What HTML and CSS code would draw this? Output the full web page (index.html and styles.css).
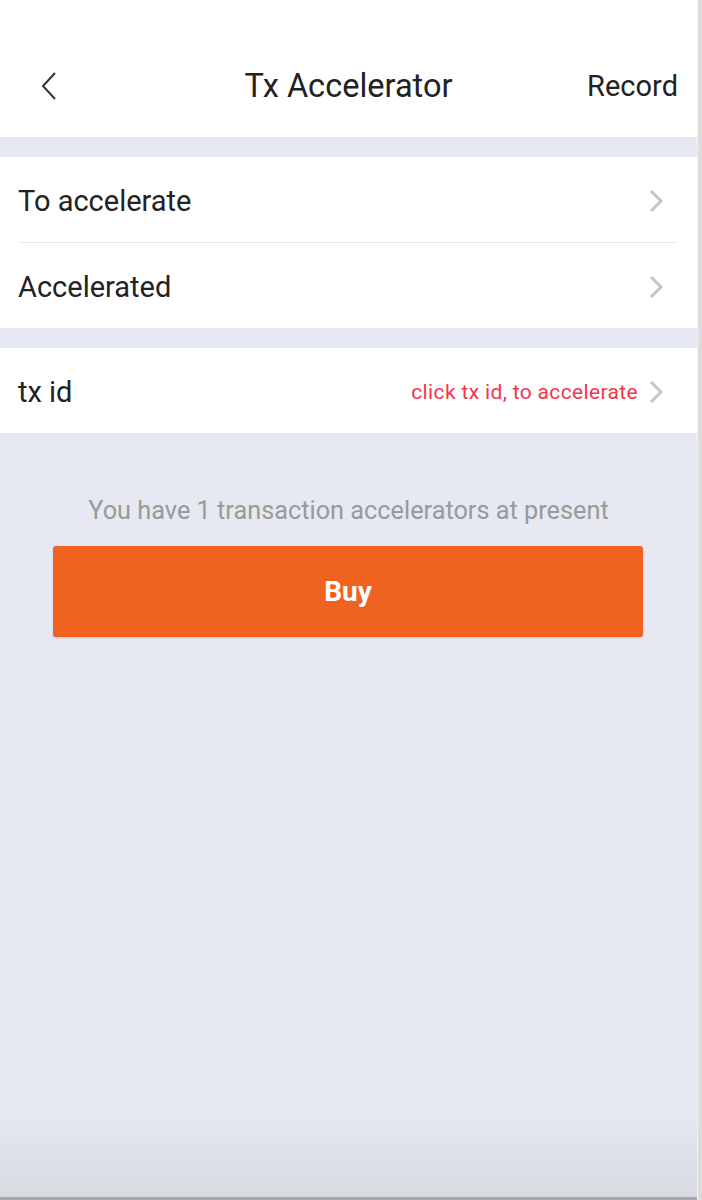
FILE: index.html
```html
<!DOCTYPE html>
<html>
<head>
<meta charset="utf-8">
<link rel="stylesheet" href="styles.css">
</head>
<body>
<div class="frame">
  <div class="screen">
    <header class="nav">
      <span class="back">
        <svg width="18" height="30" viewBox="0 0 18 30"><path d="M15 2 L3 15 L15 28" fill="none" stroke="#333" stroke-width="2"/></svg>
      </span>
      <h1 class="title">Tx Accelerator</h1>
      <span class="record">Record</span>
    </header>
    <section class="group">
      <div class="row">
        <span class="label">To accelerate</span>
        <svg class="chev" width="16" height="24" viewBox="0 0 16 24"><path d="M3 2 L13 12 L3 22" fill="none" stroke="#c6c6c6" stroke-width="3"/></svg>
      </div>
      <div class="row">
        <span class="label">Accelerated</span>
        <svg class="chev" width="16" height="24" viewBox="0 0 16 24"><path d="M3 2 L13 12 L3 22" fill="none" stroke="#c6c6c6" stroke-width="3"/></svg>
      </div>
    </section>
    <section class="group">
      <div class="row">
        <span class="label">tx id</span>
        <span class="hint">click tx id, to accelerate</span>
        <svg class="chev" width="16" height="24" viewBox="0 0 16 24"><path d="M3 2 L13 12 L3 22" fill="none" stroke="#c6c6c6" stroke-width="3"/></svg>
      </div>
    </section>
    <p class="info">You have 1 transaction accelerators at present</p>
    <div class="actions"><button class="buy">Buy</button></div>
    <div class="fade"></div>
  </div>
  <div class="edge"></div>
</div>
</body>
</html>
```
FILE: styles.css
```css
html, body { margin: 0; padding: 0; }
body { font-family: Roboto, "Noto Sans", sans-serif; background: #e6e9f1; }
.frame { display: flex; height: 1200px; overflow: hidden; }
.screen { width: 697px; background: #e6e9f1; position: relative; display: flex; flex-direction: column; }
.edge { width: 5px; background: #dcdcdc; border-left: 1px solid #f2f2f2; box-sizing: border-box; }
.nav { height: 137px; background: #fff; display: flex; align-items: center; padding: 34px 19px 0 40px; box-sizing: border-box; position: relative; }
.back { display: flex; width: 18px; height: 30px; }
.title { margin: 0; position: absolute; left: 0; right: 0; top: 34px; bottom: 0; display: flex; align-items: center; justify-content: center; font-weight: 400; font-size: 32.5px; color: #222; pointer-events: none; }
.record { margin-left: auto; font-size: 29px; color: #222; }
.group { background: #fff; margin-top: 20px; padding: 0 0 0 18px; }
.row { height: 85px; display: flex; align-items: center; padding-right: 33px; padding-top: 2px; box-sizing: border-box; }
.row + .row { border-top: 1px solid #e8e8e8; height: 86px; margin-right: 19px; padding-right: 14px; }
.group .row:first-child { margin-right: 19px; padding-right: 14px; }
.label { font-size: 29px; color: #222; }
.hint { margin-left: auto; font-size: 21px; color: #f3354d; margin-right: 10px; letter-spacing: 0.35px; }
.chev { margin-left: auto; display: block; }
.hint + .chev { margin-left: 0; }
.info { margin: 63px 0 0; text-align: center; font-size: 25.3px; color: #999; }
.actions { padding: 21px 54px 0 53px; }
.buy { width: 100%; height: 91px; border: none; border-radius: 3px; background: #f0621f; color: #fff; font-family: Roboto, sans-serif; font-weight: 700; font-size: 28px; box-shadow: 0 1px 2px rgba(0,0,0,0.15); }
.fade { position: absolute; left: 0; right: 0; bottom: 0; height: 90px; background: linear-gradient(to bottom, rgba(220,222,230,0), #d8dae2); border-bottom: 3px solid #a9a9ab; }
```
